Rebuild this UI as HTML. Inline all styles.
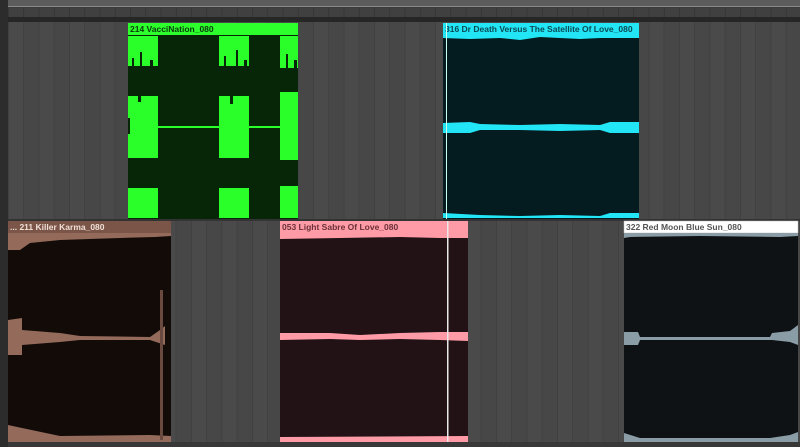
<!DOCTYPE html>
<html><head><style>
html,body{margin:0;padding:0;background:#3a3a3a;width:800px;height:447px;overflow:hidden}
svg{display:block}
text{font-family:"Liberation Sans",sans-serif;font-size:8.5px;font-weight:bold}
</style></head><body>
<svg width="800" height="447" viewBox="0 0 800 447" xmlns="http://www.w3.org/2000/svg">
<defs>
<pattern id="grid" x="8" y="0" width="30.5" height="447" patternUnits="userSpaceOnUse">
<rect width="30.5" height="447" fill="#4a4a4a"/>
<rect x="15" width="15.5" height="447" fill="#474747"/>
<rect x="0" width="1" height="447" fill="#404040"/>
<rect x="15" width="1" height="447" fill="#424242"/>
</pattern>
<pattern id="grid2" x="8" y="0" width="15.25" height="447" patternUnits="userSpaceOnUse">
<rect width="15.25" height="447" fill="#404040"/>
<rect width="1" height="447" fill="#363636"/>
</pattern>
</defs>
<rect width="800" height="447" fill="#3a3a3a"/>
<rect x="0" y="0" width="800" height="7" fill="#5c5c5c"/>
<rect x="8" y="6" width="792" height="1" fill="#8a8a8a"/>
<rect x="8" y="8" width="792" height="9" fill="url(#grid2)"/>
<rect x="0" y="17" width="800" height="5" fill="#262626"/>
<rect x="8" y="22" width="792" height="197" fill="url(#grid)"/>
<rect x="0" y="219" width="800" height="2" fill="#333"/>
<rect x="8" y="221" width="792" height="221" fill="url(#grid)"/>
<rect x="0" y="442" width="800" height="5" fill="#383838"/>
<rect x="0" y="0" width="8" height="447" fill="#2c2c2c"/>

<rect x="128" y="23" width="170" height="196" fill="#072607"/>
<rect x="128" y="23" width="170" height="12" fill="#2dff2d"/>
<text x="130" y="32" fill="#0b3a0b">214 VacciNation_080</text>
<g fill="#2aff2a">
<rect x="128" y="36" width="30" height="30"/><rect x="128" y="96" width="30" height="62"/><rect x="128" y="188" width="30" height="30"/>
<rect x="219" y="36" width="30" height="30"/><rect x="219" y="96" width="30" height="62"/><rect x="219" y="188" width="30" height="30"/>
<rect x="280" y="36" width="18" height="32"/><rect x="280" y="92" width="18" height="68"/><rect x="280" y="186" width="18" height="32"/>
<rect x="158" y="126" width="61" height="2"/><rect x="249" y="126" width="31" height="2"/>
</g>
<g fill="#072607">
<rect x="132" y="58" width="2" height="10"/><rect x="140" y="52" width="2" height="16"/><rect x="150" y="60" width="3" height="8"/>
<rect x="224" y="56" width="2" height="12"/><rect x="236" y="50" width="2" height="18"/><rect x="244" y="60" width="3" height="8"/>
<rect x="286" y="54" width="2" height="14"/><rect x="294" y="60" width="3" height="8"/>
<rect x="128" y="118" width="2" height="16" /><rect x="138" y="92" width="3" height="10"/><rect x="230" y="92" width="3" height="12"/>
</g>

<rect x="443" y="23" width="196" height="196" fill="#041c20"/>
<rect x="443" y="23" width="196" height="12" fill="#22e5f5"/>
<text x="445" y="32" fill="#0a4a55">316 Dr Death Versus The Satellite Of Love_080</text>
<polygon fill="#22e5f5" points="443,35 639,35 639,38 600,38 580,39 540,37 520,40 500,38 470,39 443,38"/>
<polygon fill="#22e5f5" points="443,123 470,122 480,124 520,125 560,124 600,125 610,122 639,122 639,133 610,133 600,130 560,131 520,130 480,130 470,133 443,133"/>
<polygon fill="#22e5f5" points="443,213 480,215 520,216 560,215 600,216 610,213 639,213 639,218 443,218"/>
<rect x="446" y="23" width="1" height="196" fill="#cfe"/>

<rect x="8" y="221" width="163" height="221" fill="#120b08"/>
<rect x="8" y="221" width="163" height="12" fill="#7b5547"/>
<text x="10" y="230" fill="#f0e0d8">... 211 Killer Karma_080</text>
<polygon fill="#946a5b" points="8,233 171,233 171,236 155,237 120,238 60,240 30,243 20,250 8,250"/>
<polygon fill="#946a5b" points="8,320 22,318 22,330 60,333 80,336 150,337 160,330 165,326 165,345 150,340 80,340 60,342 22,345 22,355 8,355"/>
<polygon fill="#946a5b" points="8,425 22,428 60,436 150,435 171,436 171,442 8,442"/>
<rect x="160" y="290" width="3" height="150" fill="#6a4a3e"/>

<rect x="280" y="221" width="188" height="221" fill="#221215"/>
<rect x="280" y="221" width="188" height="12" fill="#ff9ba6"/>
<text x="282" y="230" fill="#6b3038">053 Light Sabre Of Love_080</text>
<polygon fill="#ff9ba6" points="280,233 468,233 468,238 440,238 400,237 340,238 280,239"/>
<polygon fill="#ff9ba6" points="280,333 330,333 360,335 400,333 440,332 468,332 468,341 440,340 400,339 360,340 330,339 280,340"/>
<polygon fill="#ff9ba6" points="280,437 468,436 468,442 280,442"/>
<rect x="447" y="221" width="1.5" height="221" fill="#e8e8e8"/>

<rect x="624" y="221" width="174" height="221" fill="#0f1214"/>
<rect x="624" y="221" width="174" height="12" fill="#ffffff" stroke="#bbb" stroke-width="0.5"/>
<text x="626" y="230" fill="#555">322 Red Moon Blue Sun_080</text>
<polygon fill="#8a9ca6" points="624,233 798,233 798,236 780,237 700,236 630,237 624,238"/>
<polygon fill="#8a9ca6" points="624,332 638,332 640,337 700,337 770,337 772,333 790,331 798,325 798,345 790,342 772,340 700,340 640,340 638,345 624,345"/>
<polygon fill="#8a9ca6" points="624,433 640,438 770,438 790,435 798,432 798,442 624,442"/>
</svg>
</body></html>
